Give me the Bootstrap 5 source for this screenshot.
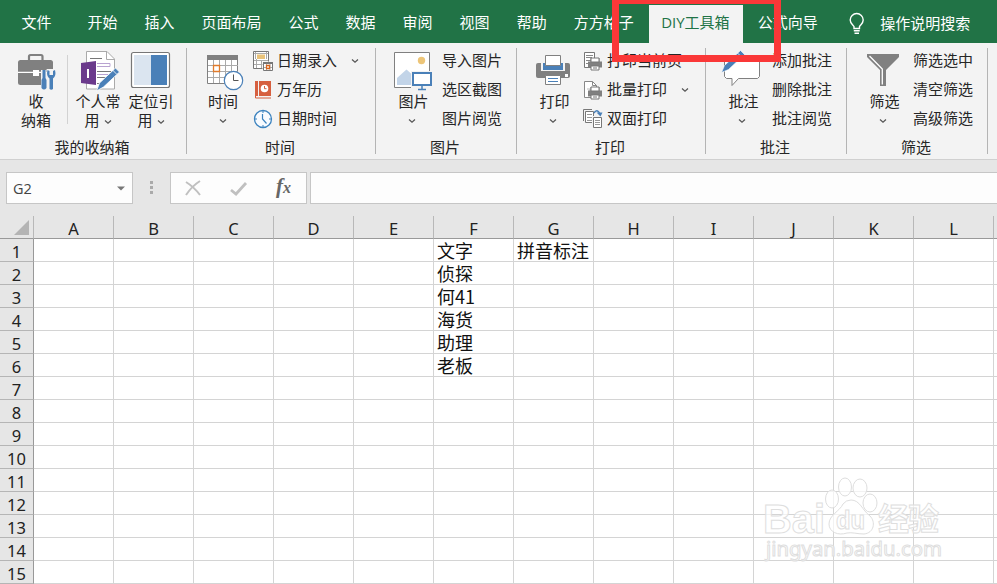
<!DOCTYPE html>
<html lang="zh-CN">
<head>
<meta charset="utf-8">
<meta name="viewport" content="width=device-width, initial-scale=1">
<title>Excel</title>
<link href="https://cdn.jsdelivr.net/npm/bootstrap@5.3.0/dist/css/bootstrap.min.css" rel="stylesheet">
<style>
body{font-family:"Noto Sans CJK SC",sans-serif;font-size:15px;line-height:19px;color:#262626;width:997px;height:584px;background:#e6e6e6}
svg{display:block;flex:none;overflow:visible}
.tabbar{height:43px;background:#217346;padding-left:8px}
.tabbar .nav-link{color:#fff;padding:0 13.5px;line-height:34px;height:38px;border-radius:0}
.tabbar .nav-link:first-child{margin-right:9px}
.tabbar .nav-link.active{font-family:"Open Sans","Noto Sans CJK SC",sans-serif;color:#217346;background:#f3f3f3;padding:0 12px;margin:0 1px 0 2px;width:94px}
.bulb{margin-left:18px}
.tell{color:#fff;line-height:35px;height:38px;margin-left:15px}
.ribbon{height:117px;background:#f3f3f3;border-bottom:1px solid #d0d0d0;padding-top:3px}
.grp{width:188px;height:108px}
.grp.slim{width:140px}
.grp.first-grp{width:186px}
.grp-body{height:87px;padding-left:8px}
.grp-name{line-height:27px;padding-right:2px}
.sep{width:1px;height:106px;margin-top:2px;background:#b4b4b4}
.thin{width:1px;height:69px;margin:9px 4px 0 3px;background:#d2d2d2}
.big{width:56px;margin-right:2px;text-align:center}
.big.flush{margin-right:0}
.big.duo{width:52px;margin-right:1px}
.big .cap{height:19px;line-height:17px}
.shift .cap{padding-left:3px}
.big .chev{margin:7px auto 0}
.rowitem{height:29px;line-height:27px}
.rowitem>span{height:29px}
.arrow{margin-left:14px}
.fbar{height:56px;padding-top:12px;padding-left:6px}
.fbox{height:32px;background:#fdfdfd;border:1px solid #c6c6c6}
.namebox{width:127px;padding:0 7px 0 6px;color:#444;font-family:"Open Sans",sans-serif;font-size:14.5px}
.grip{margin-left:17px}
.fnbox{width:137px;margin-left:16px;margin-right:3px;padding-left:13px}
.sheet{table-layout:fixed;width:1074px;border-collapse:separate;border-spacing:0;font-size:18px;color:#111}
.sheet td,.sheet th{font-weight:400;padding:0;height:23px;line-height:22px;border-right:1px solid #d4d4d4;border-bottom:1px solid #d4d4d4;white-space:nowrap}
.sheet td{background:#fff;padding-left:3px}
.sheet td>div{height:22px;line-height:23px}
.sheet th{background:#e6e6e6;text-align:center;font-family:"Noto Sans",sans-serif;font-size:16.5px;color:#222}
.sheet th>div{height:22px;line-height:25px}
.sheet thead th{border-bottom-color:#999;border-right-color:#b8b8b8}
.sheet tbody th{border-right-color:#999;border-bottom-color:#b5b5b5}
.corner-col{width:34px}
.clip{height:368px;overflow:hidden}
.marker{left:612px;top:-3px;width:169px;height:65px;border:7px solid #fa3838;z-index:3}
.wm{left:755px;top:470px;z-index:2}
</style>
</head>
<body class="overflow-hidden position-relative">
<svg width="0" height="0" class="position-absolute"><defs>
<symbol id="chev" viewBox="0 0 8 6"><path d="M1 1.5L4 4.3L7 1.5" fill="none" stroke="#555" stroke-width="1.2"/></symbol>
<symbol id="pr" viewBox="0 0 14 14"><path d="M0 4.5h2.5v-3.5h9v3.5h2.5v6h-14z" fill="#808080"/><path d="M3 1h8v4h-8zM3 9h8v4h-8z" fill="#fff" stroke="#777"/><path d="M5 11h4" stroke="#777"/></symbol>
</defs></svg>

<nav class="tabbar d-flex align-items-end">
<div class="nav flex-nowrap text-nowrap">
<a class="nav-link">文件</a><a class="nav-link">开始</a><a class="nav-link">插入</a><a class="nav-link">页面布局</a><a class="nav-link">公式</a><a class="nav-link">数据</a><a class="nav-link">审阅</a><a class="nav-link">视图</a><a class="nav-link">帮助</a><a class="nav-link">方方格子</a><a class="nav-link active">DIY工具箱</a><a class="nav-link">公式向导</a>
</div>
<svg class="bulb mb-2" width="16" height="22" viewBox="0 0 16 22" fill="none" stroke="#fff" stroke-width="1.4"><path d="M5 15.500V13.500C4 11.500 1.200 10.500 1.200 7A6.500 6.500 0 0 1 14.200 7C14.200 10.500 11.500 11.500 10.500 13.500V15.500ZM4.800 17.800H10.700M5.500 20.200H10"/></svg>
<div class="tell text-nowrap">操作说明搜索</div>
</nav>

<div class="ribbon d-flex">
 <div class="grp first-grp">
  <div class="grp-body d-flex">
   <div class="big flush"><svg width="56" height="46" viewBox="8 46 56 46"><path d="M29 60V56.500Q29 55 30.500 55H41Q42.500 55 42.500 56.500V60" fill="none" stroke="#808080" stroke-width="2.200"/><rect x="18" y="60" width="35" height="25" rx="2.500" fill="#808080"/><path d="M18 72.300H53" stroke="#fff" stroke-width="1.300"/><rect x="33" y="70" width="6" height="6" fill="#fff"/><path d="M41 70h5.500v3h1l-1-4h9.500v8l-2 3v10H41z" fill="#f3f3f3"/><path d="M42.500 70h3v8l1 2v8q-2.500 3-5 0v-8l1-2zM47.500 70q-1.500 6 2 8.500v10.500q1.800 1.500 3.500 0V78.500q3.500-2.500 2-8.500l-2 1v4h-3.500v-4z" fill="#4a80b8"/></svg><div class="cap">收</div><div class="cap">纳箱</div></div>
   <div class="thin"></div>
   <div class="big duo"><svg width="52" height="46" viewBox="72 46 52 46"><path d="M86.500 51.500H107L114.500 59V89H86.500Z" fill="#fff" stroke="#aaa"/><path d="M106.500 51.500V59.500H114.500" fill="none" stroke="#aaa"/><path d="M90 58.500h12M97 71.500h14M97 77.500h12M97 83.500h6" stroke="#777"/><path d="M97 63.500h13v3H97M97 74.500h11" fill="none" stroke="#b9a3d1"/><path d="M81 63l15-2v24l-15-2z" fill="#6b3a8c"/><path d="M88 69v9" stroke="#fff" stroke-width="2"/><path d="M115.500 68l4 4-16 15-7 4 3-8z" fill="#4a80b8" stroke="#fff" stroke-width=".8"/><path d="M112.500 70l4 4" stroke="#fff" stroke-width=".8"/></svg><div class="cap text-nowrap">个人常</div><div class="cap d-flex justify-content-center"><span>用</span><svg class="ms-1 mt-2" width="8" height="6"><use href="#chev"/></svg></div></div>
   <div class="big duo"><svg width="52" height="46" viewBox="125 46 52 46"><rect x="131.500" y="52.500" width="38" height="35" rx="2" fill="#fff" stroke="#777" stroke-width="1.200"/><path d="M134 55h17v30h-17z" fill="#dbe5f0"/><path d="M151 55h16v30h-16z" fill="#4a80b8"/></svg><div class="cap text-nowrap">定位引</div><div class="cap d-flex justify-content-center"><span>用</span><svg class="ms-1 mt-2" width="8" height="6"><use href="#chev"/></svg></div></div>
  </div>
  <div class="grp-name text-center">我的收纳箱</div>
 </div><div class="sep"></div>

 <div class="grp">
  <div class="grp-body d-flex">
   <div class="big"><svg width="56" height="46" viewBox="195 46 56 46"><path d="M207.500 56h30v27.500h-30z" fill="#fff" stroke="#808080"/><path d="M207 55h31v5h-31z" fill="#808080"/><path d="M213.500 60v23M219.500 60v23M225.500 60v23M231.500 60v23M208 65.500h30M208 71.500h30M208 77.500h30" stroke="#aaa"/><path d="M213.500 65.500h6v6h-6z" fill="#fff" stroke="#e07b2c" stroke-width="1.300"/><circle cx="233.500" cy="80.500" r="9.200" fill="#fff" stroke="#4a80b8" stroke-width="1.200"/><path d="M233.500 74.500V80.500H238.500" fill="none" stroke="#555"/></svg><div class="cap">时间</div><svg class="chev" width="8" height="6"><use href="#chev"/></svg></div>
   <div>
    <div class="rowitem d-flex align-items-center"><svg width="20" height="20" viewBox="0 0 20 20"><path d="M.5 .5h15v17H.500z" fill="#fff" stroke="#777"/><path d="M1 9.500h14M1 13.500h12M3.500 8v9M8.500 9v8M2.500 1v7M13.500 1v7M1 2.500h14" stroke="#aaa"/><path d="M4 3.500h8V8H4z" fill="#e9c37a"/><path d="M10 11h10v9H10z" fill="#fff" stroke="#f3f3f3"/><path d="M10.500 11.500h9v8h-9z" fill="#fff" stroke="#777"/><path d="M10 11h10v2H10z" fill="#777"/><path d="M11 16.500h8M13.500 13v6M17 13v6" stroke="#aaa"/><path d="M13.500 14.500h3v3h-3z" fill="#fff" stroke="#d9651d" stroke-width="1.300"/></svg><span class="ms-1">日期录入</span><svg class="arrow" width="8" height="6"><use href="#chev"/></svg></div>
    <div class="rowitem d-flex align-items-center"><svg width="20" height="20" viewBox="0 0 20 20"><path d="M2 1h3v15H2zM6 1h12v15H6z" fill="#d65f3f"/><path d="M2.500 15v3H18" fill="none" stroke="#d65f3f"/><circle cx="11.500" cy="8.500" r="3.800" fill="#fff"/><path d="M11.500 6v2.700h2" fill="none" stroke="#d65f3f"/></svg><span class="ms-1">万年历</span></div>
    <div class="rowitem d-flex align-items-center"><svg width="20" height="20" viewBox="0 0 20 20"><circle cx="10" cy="10" r="8.500" fill="#f8fbff" stroke="#3c83bf" stroke-width="1.300"/><path d="M9.500 5v5l4 4.500" fill="none" stroke="#3c83bf" stroke-width="1.200"/><path d="M10 2v2M10 16v2M2 10h2M16 10h2" stroke="#3c83bf"/></svg><span class="ms-1">日期时间</span></div>
   </div>
  </div>
  <div class="grp-name text-center">时间</div>
 </div><div class="sep"></div>

 <div class="grp slim">
  <div class="grp-body d-flex">
   <div class="big shift"><svg width="56" height="46" viewBox="384 46 56 46"><path d="M394.500 52.500h35v35h-35z" fill="#fff" stroke="#808080"/><circle cx="421.500" cy="60.500" r="3.700" fill="#edc578"/><path d="M397 85v-7l9.500-8.500 4.500 4V85z" fill="#c2d4e8"/><path d="M411 71h22v20h-22z" fill="#f3f3f3"/><path d="M413 73h18v12h-18z" fill="#fff" stroke="#4a80b8" stroke-width="2"/><path d="M422 86v3M418 89.500h8" stroke="#4a80b8" stroke-width="1.500"/></svg><div class="cap">图片</div><svg class="chev" width="8" height="6"><use href="#chev"/></svg></div>
   <div><div class="rowitem">导入图片</div><div class="rowitem">选区截图</div><div class="rowitem">图片阅览</div></div>
  </div>
  <div class="grp-name text-center">图片</div>
 </div><div class="sep"></div>

 <div class="grp">
  <div class="grp-body d-flex">
   <div class="big shift"><svg width="56" height="46" viewBox="525 46 56 46"><path d="M536 65q0-2 2-2h30q2 0 2 2v11q0 2-2 2h-30q-2 0-2-2z" fill="#808080"/><path d="M541 62h24v9h-24z" fill="#f3f3f3"/><path d="M543 63h20v7h-20z" fill="#4a80b8"/><path d="M545.500 55.500h15v10h-15zM545.500 75.500h15v9h-15z" fill="#fff" stroke="#808080"/><path d="M548 78.500h10M548 81.500h10" stroke="#4a80b8"/><path d="M565 74h3v3h-3z" fill="#fff"/></svg><div class="cap">打印</div><svg class="chev" width="8" height="6"><use href="#chev"/></svg></div>
   <div>
    <div class="rowitem d-flex align-items-center"><svg width="20" height="20" viewBox="0 0 20 20"><path d="M1.500 1.500h10v15h-10z" fill="#fff" stroke="#777"/><path d="M3 4.500h7M3 6.500h6M3 9.500h6M3 12.500h4" stroke="#888"/><use href="#pr" x="5" y="6" width="14" height="14"/></svg><span class="ms-1">打印当前页</span></div>
    <div class="rowitem d-flex align-items-center"><svg width="20" height="20" viewBox="0 0 20 20"><path d="M1.500 1.500h8l4 4v12h-12z" fill="#fff" stroke="#888"/><path d="M9.500 1.500v4h4" fill="none" stroke="#888"/><path d="M4 9h3v5" fill="none" stroke="#bbb"/><use href="#pr" x="5" y="6" width="14" height="14"/></svg><span class="ms-1">批量打印</span><svg class="arrow" width="8" height="6"><use href="#chev"/></svg></div>
    <div class="rowitem d-flex align-items-center"><svg width="20" height="20" viewBox="0 0 20 20"><path d="M.5 12V.5H9" fill="none" stroke="#777"/><path d="M2.500 2.500h8v11h-8z" fill="#fff" stroke="#777"/><path d="M4 5.500h5M4 8.500h5M4 11.500h5" stroke="#999"/><path d="M9 7h11v12H9z" fill="#f3f3f3"/><path d="M10.500 8.500h8v10h-8z" fill="#fff" stroke="#777"/><path d="M12 11.500h5M12 13.500h5M12 15.500h5" stroke="#999"/><path d="M11 4q3-5 6 1" fill="none" stroke="#4a80b8" stroke-width="1.500"/><path d="M13.500 3.500h6l-2 4z" fill="#4a80b8"/></svg><span class="ms-1">双面打印</span></div>
   </div>
  </div>
  <div class="grp-name text-center">打印</div>
 </div><div class="sep"></div>

 <div class="grp slim">
  <div class="grp-body d-flex">
   <div class="big shift"><svg width="56" height="46" viewBox="714 46 56 46"><path d="M724.500 58.500H759.500V76.500L757.500 78.500H738.500L732 85.500V78.500H726.500L724.500 76.500Z" fill="#fff" stroke="#808080"/><path d="M740.500 50.500l4 4-16 15-7 3 3-7z" fill="#4a80b8" stroke="#fff" stroke-width=".6"/><path d="M737.500 53l4 4" stroke="#fff" stroke-width=".8"/></svg><div class="cap">批注</div><svg class="chev" width="8" height="6"><use href="#chev"/></svg></div>
   <div><div class="rowitem">添加批注</div><div class="rowitem">删除批注</div><div class="rowitem">批注阅览</div></div>
  </div>
  <div class="grp-name text-center">批注</div>
 </div><div class="sep"></div>

 <div class="grp slim">
  <div class="grp-body d-flex">
   <div class="big shift"><svg width="56" height="46" viewBox="855 46 56 46"><path d="M867 54h32v3l-13 13v16h-6V70L867 57z" fill="#808080"/><path d="M869.500 56l12.800 13v15.500" fill="none" stroke="#fff" stroke-width="1.300"/></svg><div class="cap">筛选</div><svg class="chev" width="8" height="6"><use href="#chev"/></svg></div>
   <div><div class="rowitem">筛选选中</div><div class="rowitem">清空筛选</div><div class="rowitem">高级筛选</div></div>
  </div>
  <div class="grp-name text-center">筛选</div>
 </div><div class="sep"></div>
</div>

<div class="fbar d-flex">
 <div class="fbox namebox d-flex align-items-center justify-content-between"><span>G2</span><svg width="8" height="5" viewBox="0 0 8 5"><path d="M0 .5h8L4 4.500z" fill="#777"/></svg></div>
 <svg class="grip" width="4" height="32" fill="#aaa"><path d="M0 9h3v3H0zM0 14h3v3H0zM0 19h3v3H0z"/></svg>
 <div class="fbox fnbox d-flex align-items-center"><svg width="110" height="20" viewBox="0 0 110 20" fill="none" stroke="#c0c0c0"><path d="M2 4Q10 9 16 17M16 3Q8 8 2 17" stroke-width="2"/><path d="M47 12L52 16L62 5" stroke-width="2.800"/><text x="92" y="15" font-family="Liberation Serif,serif" font-style="italic" font-weight="700" font-size="21" fill="#666" stroke="none">f<tspan font-size="16">x</tspan></text></svg></div>
 <div class="fbox flex-grow-1 border-end-0"></div>
</div>

<div class="clip"><table class="sheet"><colgroup><col class="corner-col"></colgroup><thead><tr id="cols"></tr></thead><tbody id="cells"></tbody></table></div>

<div class="marker position-absolute"></div>
<svg class="wm position-absolute" width="200" height="95" viewBox="755 470 200 95" fill="#fff" fill-opacity=".7" stroke="#dedede" stroke-width="1">
<g font-family="Liberation Sans,sans-serif" font-weight="700"><text x="763" y="533" font-size="41" textLength="62" lengthAdjust="spacingAndGlyphs">Bai</text>
<ellipse cx="832" cy="499" rx="6.500" ry="9"/><ellipse cx="845" cy="487" rx="6.500" ry="9"/><ellipse cx="860" cy="488" rx="7" ry="9"/><ellipse cx="870" cy="503" rx="7" ry="9"/>
<path d="M851 500C860 500 862 510 870 516C876 522 874 533 864 534C857 534 852 532 847 533C838 536 829 532 829 524C829 515 840 511 843 504Q846 500 851 500Z"/>
<text x="836" y="529" font-size="25" textLength="29" lengthAdjust="spacingAndGlyphs">du</text></g>
<text x="878" y="530" font-family="Noto Sans CJK SC,sans-serif" font-weight="700" font-size="31" textLength="61">经验</text>
<text x="766" y="556" font-family="Noto Sans,sans-serif" font-weight="400" font-size="20" textLength="176" lengthAdjust="spacingAndGlyphs">jingyan.baidu.com</text>
</svg>

<script>
const letters = 'ABCDEFGHIJKL'.split('');
const data = {F1:'文字',G1:'拼音标注',F2:'侦探',F3:'何41',F4:'海货',F5:'助理',F6:'老板'};
document.getElementById('cols').innerHTML =
  '<th><svg width="15" height="15" class="ms-auto me-1"><path d="M15 0V15H0Z" fill="#b4b4b4"/></svg></th>' +
  letters.map(l => `<th><div>${l}</div></th>`).join('') + '<th></th>';
let rows = '';
for (let r = 1; r <= 15; r++)
  rows += `<tr><th><div>${r}</div></th>` + letters.map(l => `<td>${data[l + r] ? `<div>${data[l + r]}</div>` : ''}</td>`).join('') + '<td></td></tr>';
document.getElementById('cells').innerHTML = rows;
</script>
<script src="https://cdn.jsdelivr.net/npm/bootstrap@5.3.0/dist/js/bootstrap.bundle.min.js"></script>
</body>
</html>
